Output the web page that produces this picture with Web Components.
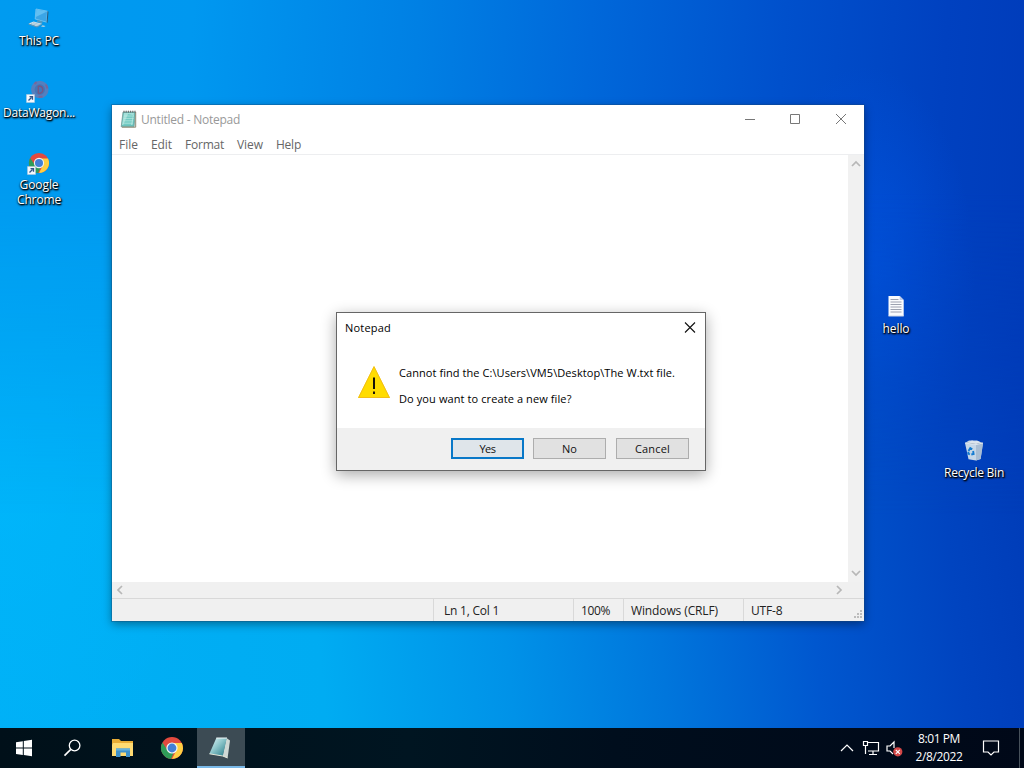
<!DOCTYPE html>
<html lang="en">
<head>
<meta charset="utf-8">
<title>Desktop</title>
<style>
html,body{margin:0;width:1024px;height:768px;overflow:hidden;font:12px/16px "Open Sans","Noto Sans",sans-serif}
</style>
</head>
<body>
<win-desktop></win-desktop>
<script>
const icons = {
pc:`<svg width="24" height="22" viewBox="0 0 24 22"><path d="m9 1 11.5 2.2-.8 11L8.2 11z" fill="#3ba5e6" stroke="#7cc8f2" stroke-width=".8"/><path d="M9.3 1.5 20 3.5 8.8 9z" fill="#62bff2"/><path d="m20.5 3 1 .7-.9 11-1-.3z" fill="#275a7b"/><path d="m10.5 12 5 1.5-.3 2-5.2-1.4z" fill="#5799bd"/><path d="m1.6 15.6 5-2.2 8.4 2.3-5 2.8z" fill="#cfe2ec"/><path d="m1.6 15.6 8.4 2.9 5-2.8v.8l-5 3-8.4-3z" fill="#6d95ad"/><path d="m4 15.5 7 2M6 14.6l7 2" stroke="#8fb2c5" stroke-width=".6"/><path d="m15.5 17.3 3 .6-1.5 1.2-3-.7z" fill="#b4d1df"/></svg>`,
wagon:`<svg width="24" height="22" viewBox="0 0 24 22"><circle cx="12.8" cy="9.5" r="6.8" fill="none" stroke="#567fbd" stroke-width="4"/><circle cx="12.8" cy="9.5" r="5.2" fill="#4676b5"/><path d="M11.3 6v7.5M11.3 6c6 0 6 7.5 0 7.5" stroke="#745785" stroke-width="1.4" fill="none"/><path d="m7.5 4 2-2M19 4.5l1.5 4M11.5 16.8h4" stroke="#7a6698" stroke-width="2"/></svg>`,
chrome:`<svg width="24" height="24" viewBox="0 0 24 24"><circle cx="12" cy="12" r="11" fill="#e24a3f"/><path d="M12 7h9.8A11 11 0 0 1 12 23l4.3-8.5A5 5 0 0 0 12 7z" fill="#ffcf43"/><path d="M2.4 6.5 7.7 14.5a5 5 0 0 0 6 2L11 23A11 11 0 0 1 2.4 6.5z" fill="#2f9c58"/><circle cx="12" cy="12" r="5.6" fill="#f3f6f5"/><circle cx="12" cy="12" r="4.4" fill="#437fd7"/></svg>`,
text:`<svg width="24" height="24" viewBox="0 0 24 24"><path d="M4.5 1h11.2l4 4v16H4.5z" fill="#fafbfd"/><path d="M15.7 1v4h4" fill="#c0cce9"/><path d="M6.5 4.5h8M6.5 7h11M6.5 9.5h11M6.5 12h11M6.5 14.5h11M6.5 17h11" stroke="#858b9c" stroke-width=".8"/><path d="M4.5 21h15.2" stroke="#ced5e4"/></svg>`,
bin:`<svg width="24" height="24" viewBox="0 0 24 24"><g transform="translate(0 -1)"><path d="m3 5 4-2.5h7L21 5l-2.4 16L14 22.5l-7.5-1.3z" fill="#c6d7e8"/><path d="m3 5 11 1.5L21 5l-6-1-6 .5z" fill="#7389a3"/><path d="m6 4.5 4-2 3 1 2-1 4 2-5 1.5z" fill="#dce4ed"/><path d="m14 6.5 7-1.5-2.4 16-4.6 1.5z" fill="#a9bdd3"/><path d="m3 5 11 1.5L21 5" stroke="#eef3f8" fill="none" stroke-width=".8"/><path d="m6.5 13 1.8-3 2 1.2M11.1 13l.5 3-2.3.5M7.9 16.4l-1.6-.7.1-2" fill="none" stroke="#147bd1" stroke-width="1.9"/></g></svg>`,
note:`<svg width="18" height="19" viewBox="0 0 18 19"><path d="M3 2h12.3l-1.2 14.8H1.2z" fill="#67bfb9" stroke="#6b908d" stroke-width=".7"/><path d="M4 3h10l-1.5 12H2z" fill="#a5e0d9"/><path d="m8 4 5 1-2 10-8 .5z" fill="#72cbc3"/><path d="M4 6h10M3.7 8.4h10M3.4 10.8h9.8M3 13.2h9.8" stroke="#c2ede5" stroke-width=".65"/><path d="M15.7 2v15.2H2" stroke="#8e8b74" fill="none"/><path d="M4 .7v2M6.2.7v2M8.4.7v2M10.6.7v2M12.8.7v2M15 .7v2" stroke="#666"/></svg>`,
windows:`<svg width="18" height="18" viewBox="0 0 18 18"><path d="M1 3.2 7.8 2.2V8.5H1zM8.8 2 17 .8v7.7H8.8zM1 9.5h6.8v6.4L1 14.9zM8.8 9.5H17v7.8l-8.2-1.2z" fill="#fff"/></svg>`,
search:`<svg width="20" height="20" viewBox="0 0 20 20"><circle cx="11.6" cy="7.5" r="5.3" fill="none" stroke="#fff" stroke-width="1.3"/><path d="m7.8 11.4-6.3 6.2" stroke="#fff" stroke-width="1.6"/></svg>`,
folder:`<svg width="24" height="22" viewBox="0 0 24 22"><path d="M1 2h7l2 2h12v15H1z" fill="#e9ad36"/><path d="M2 6h20v13H1V8z" fill="#ffdb72"/><path d="M5 11.5h14V20h-4v-4.5H9.5V20H5z" fill="#3e91cb"/><path d="M5 11.5h14v2H5z" fill="#67b2dc"/></svg>`,
tasknote:`<svg width="26" height="25" viewBox="0 0 26 25"><defs><linearGradient id="g" x2="1" y2="1"><stop stop-color="#e4f8fa"/><stop offset=".45" stop-color="#8ec6cb"/><stop offset="1" stop-color="#237885"/></linearGradient></defs><path d="m18.5 3 3.5 2.5-2.4 17.5-5-2z" fill="#cfd8d5"/><path d="M8.3 3h10.5l-4 18-13.4-2.2z" fill="url(#g)"/><path d="M8.3 3H19" stroke="#eff7f7"/><path d="m1.4 18.8 13.4 2.2 4.8 2" stroke="#e5e7d9" fill="none"/></svg>`,
warning:`<svg width="34" height="34" viewBox="0 0 34 34"><path d="M17 1 33 33H1z" fill="#ffdc00"/><path d="m17 1.7 15.4 30.8H1.6z" fill="none" stroke="#f2be16" stroke-width="1"/><path d="M17 12.5v11.5M17 26.5v2.5" stroke="#17130a" stroke-width="2"/></svg>`
};
function define(name, markup, ready){
 customElements.define(name,class extends HTMLElement{
  connectedCallback(){if(this.shadowRoot)return;const t=document.createElement('template');t.innerHTML=markup;const s=this.attachShadow({mode:'open'});s.append(t.content.cloneNode(true));if(ready)ready(this,s)}
 });
}
define('ui-icon','<style>:host{display:inline-flex;flex:none}svg{display:block}:host([small]) svg{width:22px;height:22px}</style><span></span>',(e,s)=>{s.querySelector('span').innerHTML=icons[e.getAttribute('name')]});
define('ui-label','<style>:host{display:inline-block;white-space:nowrap}span{display:inline-block}</style><span><slot></slot></span>',(e,s)=>{
 const target=+e.getAttribute('fit'),span=s.querySelector('span'),count=e.textContent.length;
 if(target){const w=span.getBoundingClientRect().width;span.style.letterSpacing=((target-w)/count)+'px'}
});
define('desktop-icon',`<style>:host{position:absolute;width:76px;display:flex;flex-direction:column;align-items:center;color:white;text-align:center;line-height:15px;text-shadow:0 1px 2px #000,1px 1px 2px #000,1px 1px 1px #000a;font-size:12px}.pic{display:grid;place-items:center;height:24px;position:relative;margin-bottom:2px}.short{position:absolute;left:-1px;bottom:0;display:none}:host([shortcut]) .short{display:block}</style><div class="pic"><slot name="icon"></slot><svg class="short" width="9" height="9"><path fill="#f4f7fc" stroke="#b8c8d9" stroke-width=".5" d="M.5.5h8v8h-8z"/><path d="m2.5 6.5 3-3M3.5 2.7h3v3" fill="none" stroke="#315689" stroke-width="1.3"/></svg></div><slot></slot>`);
define('notepad-window',`<style>
:host{position:absolute;left:112px;top:105px;width:752px;height:516px;background:white;box-shadow:0 0 0 1px #17477455,0 3px 9px #0006;display:grid;grid-template-rows:29px 21px 1fr 16px 23px;color:#666}
header{display:flex;padding-left:8px;align-items:center;color:#999}header ui-label{margin-left:3px}.controls{display:flex;margin-left:auto;height:100%}.controls svg{width:46px;height:29px}
nav{display:flex;gap:13px;padding-left:7px;align-items:center;box-sizing:border-box;padding-top:2px;border-bottom:1px solid #edeef0;line-height:18px}
main{display:flex;min-height:0}.paper{flex:1}.v{width:16px;background:#f1f1f1;display:flex;flex-direction:column;justify-content:space-between}.h{display:flex;background:#f0f0f0;justify-content:space-between;padding-right:17px}.arrow{width:16px;height:16px;fill:none;stroke:#b7b7b7;stroke-width:1.7}.v .arrow{margin-left:-.5px}.v .arrow:first-child{margin-top:1px}
footer{display:grid;grid-template-columns:322px 140px 50px 120px 1fr;border-top:1px solid #d8d8d8;background:#f0f0f0;color:#222;position:relative;line-height:24px}footer div{height:22px;border-right:1px solid #d9d9d9;padding-left:7px}footer div:nth-child(2){padding-left:10px}footer div:last-of-type{border:0}.grip{position:absolute;right:1px;bottom:1px}
</style><header><ui-icon name="note"></ui-icon><ui-label fit="99">Untitled - Notepad</ui-label><div class="controls"><svg viewBox="0 0 46 29"><path d="M19 14.5h10" stroke="#777"/></svg><svg viewBox="0 0 46 29"><path d="M18.5 9.5h9v9h-9z" fill="none" stroke="#777"/></svg><svg viewBox="0 0 46 29"><path d="m18 9 10 10M28 9 18 19" stroke="#777"/></svg></div></header><nav><ui-label fit="19">File</ui-label><ui-label fit="21">Edit</ui-label><ui-label fit="39">Format</ui-label><ui-label fit="26">View</ui-label><ui-label fit="25">Help</ui-label></nav><main><div class="paper"></div><div class="v"><svg class="arrow"><path d="m4 10 4-4 4 4"/></svg><svg class="arrow"><path d="m4 5 4 4 4-4"/></svg></div></main><div class="h"><svg class="arrow"><path d="m10 4-4 4 4 4"/></svg><svg class="arrow"><path d="m6 4 4 4-4 4"/></svg></div><footer><div></div><div><ui-label fit="55">Ln 1, Col 1</ui-label></div><div><ui-label fit="29">100%</ui-label></div><div><ui-label fit="87">Windows (CRLF)</ui-label></div><div><ui-label fit="31.5">UTF-8</ui-label></div><svg class="grip" width="10" height="10"><path d="M7 0h2v2H7zM4 3h2v2H4zM7 3h2v2H7zM1 6h2v2H1zM4 6h2v2H4zM7 6h2v2H7z" fill="#bcbcbc"/></svg></footer>`);
define('dialog-button',`<style>:host{display:block;width:73px;height:21px}button{box-sizing:border-box;width:100%;height:100%;display:grid;place-items:center;background:#e1e1e1;border:1px solid #adadad;color:#111;font:11px/17px "Open Sans",sans-serif;padding:0}:host([primary]) button{border:2px solid #0878c8;background:#dfe5ea}</style><button><slot></slot></button>`);
define('file-dialog',`<style>:host{position:absolute;box-sizing:border-box;left:336px;top:312px;width:370px;height:159px;background:#fff;border:1px solid #666;box-shadow:0 4px 14px #0005;color:#000;display:grid;grid-template-rows:30px 85px 1fr;font-size:11px;line-height:16px}header{display:flex;justify-content:space-between;align-items:center;padding:0 9px 0 8px}header svg{width:13px;height:13px;margin-top:-2px}.body{display:flex;align-items:flex-start;padding:22px 20px 0}.body ui-icon{margin:0}.copy{display:grid;gap:10px;margin:0 0 0 8px}.copy ui-label{height:16px}footer{display:flex;background:#f0f0f0;justify-content:flex-end;padding:10px 16px 0 0;gap:9px}footer dialog-button:last-child{margin-left:1px}</style><header><ui-label fit="46">Notepad</ui-label><svg><path d="m2 1.5 10 10M12 1.5l-10 10" stroke="#111" stroke-width="1.1"/></svg></header><div class="body"><ui-icon name="warning"></ui-icon><div class="copy"><ui-label fit="276">Cannot find the C:\\Users\\VM5\\Desktop\\The W.txt file.</ui-label><ui-label fit="172.5">Do you want to create a new file?</ui-label></div></div><footer><dialog-button primary><ui-label fit="16">Yes</ui-label></dialog-button><dialog-button><ui-label fit="15">No</ui-label></dialog-button><dialog-button><ui-label fit="35">Cancel</ui-label></dialog-button></footer>`);
define('task-button',`<style>:host{display:grid;width:48px;height:40px;place-items:center;box-sizing:border-box}:host([active]){background:#3c4b54;border-bottom:2px solid #79b9e8}</style><slot></slot>`);
define('system-tray',`<style>:host{display:flex;align-items:center;height:40px;color:white}svg{fill:none;stroke:#fff;stroke-width:1.2;flex:none}.clock{width:64px;display:grid;justify-items:center;line-height:18px;margin:-1px 0 0 2px}.notice{margin-left:11px}.edge{height:40px;border-left:1px solid #47515b;margin-left:19px;width:4px}</style><svg width="14" height="12"><path d="m1 9 6-6 6 6"/></svg><svg width="18" height="17" style="margin-left:8px"><path d="M6 2.5h10.5v8.5H6M11 11v3M7 14.5h8M1.5 1.5h4v4h-4zM3.5 5.5V14"/></svg><svg width="20" height="20" style="margin-left:5px"><path d="M8 16 5 13H2V8h3l4-4v6"/><circle cx="12.8" cy="13.8" r="4.6" fill="#d44747" stroke="none"/><path d="m10.8 11.8 4 4M14.8 11.8l-4 4" stroke="#fff"/></svg><div class="clock"><ui-label fit="42">8:01 PM</ui-label><ui-label fit="47">2/8/2022</ui-label></div><svg class="notice" width="18" height="18"><path d="M1.5 2h15v11H12l-3 3-3-3H1.5z"/></svg><div class="edge"></div>`);
define('win-taskbar',`<style>:host{display:flex;height:40px;background:linear-gradient(90deg,#001019,#001521 40%,#000e1d 60%,#000818);align-items:center}.apps{display:flex;gap:1.25px}system-tray{margin-left:auto}</style><div class="apps"><task-button><ui-icon name="windows"></ui-icon></task-button><task-button><ui-icon name="search"></ui-icon></task-button><task-button><ui-icon name="folder"></ui-icon></task-button><task-button><ui-icon name="chrome"></ui-icon></task-button><task-button active><ui-icon name="tasknote"></ui-icon></task-button></div><system-tray></system-tray>`);
define('win-desktop',`<style>
:host{display:grid;grid-template-rows:728px 40px;width:1024px;height:768px;position:relative;isolation:isolate;background:radial-gradient(ellipse 230px 330px at 0 450px,#00bbff88,transparent),linear-gradient(84deg,#00b0f6 0%,#00acf2 30%,#0092e8 47%,#0076dc 61%,#0057cf 75%,#0044c0 88%,#0038b4 100%)}
:host::before{content:"";position:absolute;inset:0;z-index:-1;background:radial-gradient(ellipse 110px 210px at 865px 275px,#005aee88,transparent),linear-gradient(94deg,#009bf0 0%,#0098f0 18%,#0080e4 39%,#0068da 55%,#0050cc 73%,#0041c0 88%,#003ab8 100%);-webkit-mask-image:linear-gradient(#000 0 25%,transparent 67%);mask-image:linear-gradient(#000 0 25%,transparent 67%)}
</style><div class="surface">
<desktop-icon style="left:1px;top:7px"><ui-icon slot="icon" name="pc"></ui-icon><ui-label fit="40">This PC</ui-label></desktop-icon>
<desktop-icon shortcut style="left:1px;top:79px"><ui-icon slot="icon" name="wagon"></ui-icon><ui-label fit="72">DataWagon...</ui-label></desktop-icon>
<desktop-icon shortcut style="left:1px;top:151px"><ui-icon slot="icon" name="chrome" small></ui-icon><ui-label fit="39">Google</ui-label><ui-label fit="44">Chrome</ui-label></desktop-icon>
<desktop-icon style="left:858px;top:295px"><ui-icon slot="icon" name="text"></ui-icon><ui-label fit="27">hello</ui-label></desktop-icon>
<desktop-icon style="left:936px;top:439px"><ui-icon slot="icon" name="bin"></ui-icon><ui-label fit="60">Recycle Bin</ui-label></desktop-icon>
<notepad-window></notepad-window><file-dialog></file-dialog></div><win-taskbar></win-taskbar>`);
</script>
</body>
</html>
